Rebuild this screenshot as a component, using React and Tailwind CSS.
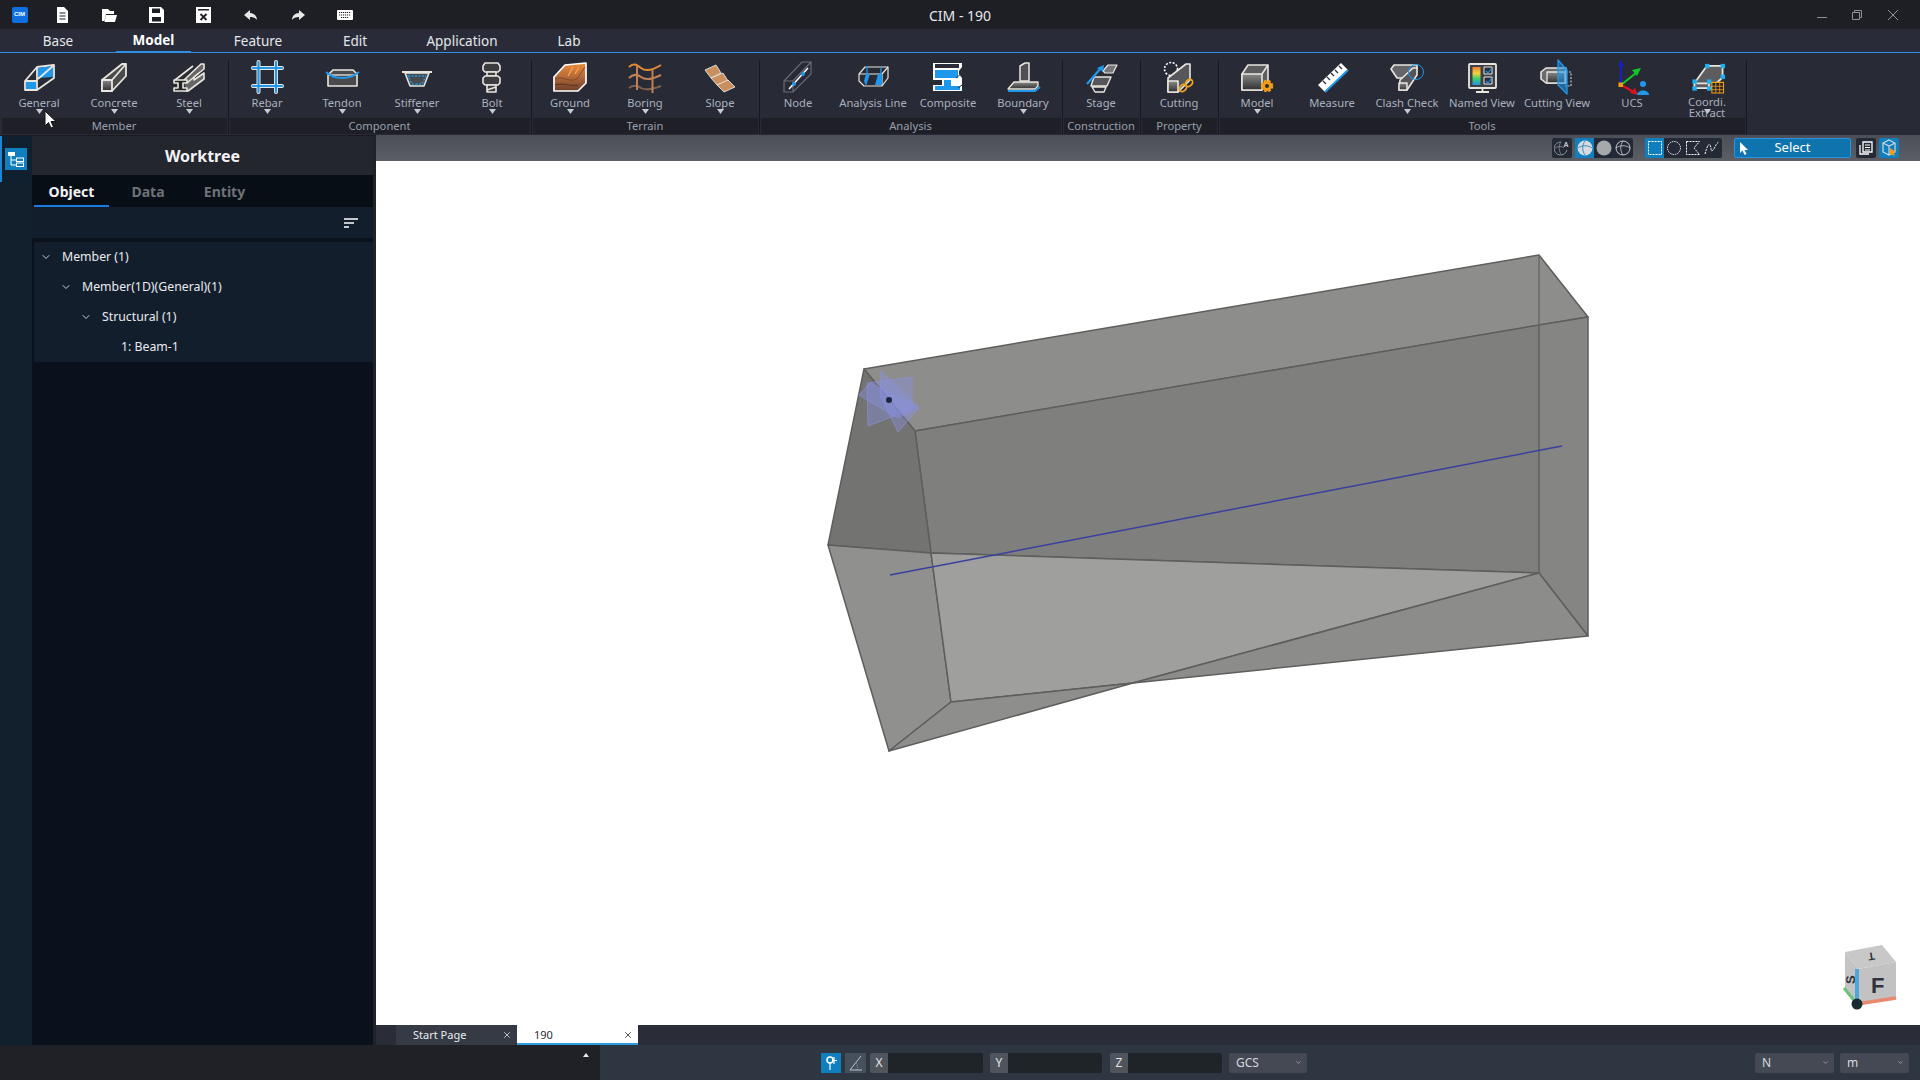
import { ChevronDown, X } from "lucide-react";

const W = "#e9e6df";
const B = "#1f97ea";

const boxGrad = (
  <defs>
    <linearGradient id="gr" x1="0" y1="0" x2="0" y2="1">
      <stop offset="0" stopColor="#8a8a88" />
      <stop offset="1" stopColor="#2f2f30" />
    </linearGradient>
    <linearGradient id="gnd" x1="0" y1="0" x2="0" y2="1">
      <stop offset="0" stopColor="#ee8c3a" />
      <stop offset="0.5" stopColor="#b5693a" />
      <stop offset="1" stopColor="#6e3f28" />
    </linearGradient>
    <linearGradient id="rain" x1="0" y1="0" x2="0" y2="1">
      <stop offset="0" stopColor="#ef7d34" />
      <stop offset="0.35" stopColor="#f2d23c" />
      <stop offset="0.65" stopColor="#3cd06a" />
      <stop offset="1" stopColor="#2a8fe8" />
    </linearGradient>
  </defs>
);

const ribbonIcons = {
  general: (
    <g stroke={W} strokeWidth="1.8" strokeLinejoin="round" fill="none">
      <path d="M8 31V22L20 8L37 6V19L20 31Z" />
      <path d="M21 9L36 7V18L21 19Z" fill={B} stroke="none" />
      <path d="M21 20L36 7" />
      <path d="M8 22H20V8M20 22V31" />
      <rect x="9" y="23" width="10" height="7" fill={B} stroke="none" />
    </g>
  ),
  concrete: (
    <g stroke={W} strokeWidth="1.8" strokeLinejoin="round">
      <path d="M10 21L30 5H34V17L20 32H10Z" fill="#4b4b4c" />
      <path d="M10 21H20V32H10Z" fill="url(#gr)" />
      <path d="M20 21L34 5" fill="none" />
    </g>
  ),
  steel: (
    <g stroke={W} strokeWidth="1.6" strokeLinejoin="round">
      <path d="M17 21L34 5H37V10L27 18V21L37 14V20L21 32H19" fill="#666" />
      <path d="M7 21H20V24H16V29H20V32H7V29H11V24H7Z" fill="#222" />
      <path d="M8 21L26 7M20 24L32 14" fill="none" />
    </g>
  ),
  rebar: (
    <g fill="none" strokeLinecap="round">
      <path d="M8 9H37M8 27H37M13.500 3V33M31 3V33" stroke={W} strokeWidth="4" />
      <path d="M8 9H37M8 27H37M13.500 3V33M31 3V33" stroke={B} strokeWidth="2.200" />
    </g>
  ),
  tendon: (
    <g strokeLinejoin="round">
      <path d="M8 16L13 11H33L37 15V27H8Z" fill="#4a4a4c" stroke={W} strokeWidth="1.6" />
      <path d="M8 16H37" stroke={W} strokeWidth="1.300" />
      <path d="M6 13C14 21 30 21 39 13" fill="none" stroke={B} strokeWidth="1.800" />
    </g>
  ),
  stiffener: (
    <g strokeLinejoin="round">
      <path d="M7 13H37" stroke={W} strokeWidth="2" />
      <path d="M10 14H34L29 27H15Z" fill="#4a4a4c" stroke={W} strokeWidth="1.5" />
      <path d="M13 17H31L27 25H17Z" fill="none" stroke={B} strokeWidth="1.5" strokeDasharray="2 1.500" />
    </g>
  ),
  bolt: (
    <g fill="#3d3d40" stroke={W} strokeWidth="1.600" strokeLinejoin="round">
      <path d="M15 4H28L30 7V11L28 13H15L13 11V7Z" />
      <path d="M17 13H26V17H17Z" />
      <path d="M15 17H28L30 19V24L28 26H15L13 24V19Z" />
      <path d="M17 26H26V33H17Z" />
      <path d="M17 31L26 28" fill="none" />
    </g>
  ),
  ground: (
    <g strokeLinejoin="round">
      <path d="M6 32V18L17 6L38 4V24L30 32Z" fill="url(#gnd)" stroke="#fff" strokeWidth="1.700" />
      <path d="M7 20C14 16 20 24 29 20L37 8" fill="none" stroke="#7f4a2b" strokeWidth="1" />
      <path d="M7 26C15 23 21 28 30 26" fill="none" stroke="#5c3421" strokeWidth="1.200" />
      <path d="M25 8L20 17M31 8L27 15" fill="none" stroke="#f3a04f" strokeWidth="1.500" />
    </g>
  ),
  boring: (
    <g fill="none" strokeWidth="2">
      <path d="M6 8C10 4 13 5 18 9C23 13 30 11 38 6" stroke="#e58a35" />
      <path d="M6 19C10 15 14 15 18 18C23 22 30 20 38 16" stroke="#c08055" />
      <path d="M6 29C10 26 14 26 18 29C23 32 30 30 38 27" stroke="#7d604e" />
      <path d="M14 6V31" stroke="#c08055" />
      <path d="M29.500 11V34" stroke="#c08055" />
    </g>
  ),
  slope: (
    <g fill="#c98f5f" stroke={W} strokeWidth="0.900">
      <path d="M7 11L18 6L23 14L13 19Z" />
      <path d="M13 19L25 14L30 22L19 26Z" />
      <path d="M19 26L30 21L37 28L26 33Z" />
    </g>
  ),
  node: (
    <g fill="none">
      <path d="M8 22V33H17L35 15V3H26ZM8 22H17V33M17 22L35 3" stroke="#6a6c72" strokeWidth="1.200" />
      <path d="M13 30L32 9" stroke="#fff" strokeWidth="1.600" />
      <circle cx="18" cy="25" r="2" fill={B} />
      <circle cx="27" cy="15" r="2" fill={B} />
    </g>
  ),
  analysis: (
    <g fill="none" stroke={W} strokeWidth="1.200" strokeLinejoin="round">
      <path d="M8 15L14 8H37V19L31 27H13L8 22Z" />
      <path d="M8 15H31V27M31 15L37 8" />
      <path d="M15 15H19L15 27L13 22Z" fill={B} stroke="none" />
      <path d="M27 15H31V26H24Z" fill={B} stroke="none" />
      <path d="M16 7V17M30 8V18" stroke={B} strokeWidth="1.300" />
    </g>
  ),
  composite: (
    <g strokeLinejoin="round">
      <path d="M7 4H36V8L33 12V15L36 19V32H7V26H16V21H7Z" fill="#fff" />
      <path d="M9 11H32V19H9Z" fill={B} />
      <path d="M9 27H18V21H25V27H34V31H9Z" fill={B} />
      <path d="M9 5H33V9H9Z" fill="#2b2d38" />
      <path d="M36 14L30 19M36 26L32 29" stroke="#2b2d38" strokeWidth="1" />
    </g>
  ),
  boundary: (
    <g strokeLinejoin="round">
      <path d="M7 30L13 23H37V27L34 30Z" fill="url(#gr)" stroke={W} strokeWidth="1.300" />
      <path d="M19 7L24 4H28V22H19Z" fill="#505054" stroke={W} strokeWidth="1.500" />
      <path d="M7 32H34L39 28" fill="none" stroke={B} strokeWidth="2" />
    </g>
  ),
  stage: (
    <g strokeLinejoin="round">
      <path d="M24 12L29 6H38L34 14H26Z" fill="#77777a" stroke={W} strokeWidth="1.200" />
      <path d="M15 18H32L28 27H12Z" fill="#55555a" stroke={W} strokeWidth="1.400" />
      <path d="M13 28H27L25 33H16Z" fill="none" stroke={W} strokeWidth="1.400" />
      <path d="M8 25L22 9" stroke={B} strokeWidth="2.300" />
      <path d="M18 9L25 6L24 13Z" fill={B} />
    </g>
  ),
  cutting: (
    <g strokeLinejoin="round" fill="none">
      <circle cx="14" cy="10" r="6.500" stroke="#fff" strokeWidth="1.600" strokeDasharray="2 1.500" />
      <path d="M11 19L29 5H33V21L21 33H11Z" fill="#57575a" stroke={W} strokeWidth="1.600" />
      <path d="M11 22H21V33H11Z" fill="url(#gr)" stroke={W} strokeWidth="1.600" />
      <ellipse cx="26" cy="29" rx="3" ry="4" transform="rotate(45 26 29)" stroke="#f0a21c" strokeWidth="1.800" />
      <ellipse cx="32" cy="24" rx="3" ry="4" transform="rotate(45 32 24)" stroke="#f0a21c" strokeWidth="1.800" />
    </g>
  ),
  model: (
    <g strokeLinejoin="round">
      <path d="M7 15L13 6H33V24L27 31H7Z" fill="#5d5d60" stroke={W} strokeWidth="1.600" />
      <path d="M7 15H27V31H7Z" fill="url(#gr)" stroke={W} strokeWidth="1.600" />
      <path d="M27 15L33 6" stroke={W} strokeWidth="1.500" />
      <circle cx="32" cy="27" r="5" fill="#f29d16" stroke="#f29d16" strokeWidth="2.500" strokeDasharray="2.500 1.500" />
      <circle cx="32" cy="27" r="2" fill="#2b2d38" />
    </g>
  ),
  measure: (
    <g strokeLinejoin="round">
      <path d="M8 26L31 4L38 11L15 33Z" fill="#fff" />
      <path d="M15 33L38 11" stroke={B} strokeWidth="2" />
      <path d="M13 22L16 25M17 18L20 21M21 14L24 17M25 11L28 14M29 7L32 10" stroke="#2b2d38" strokeWidth="1.300" />
    </g>
  ),
  clash: (
    <g strokeLinejoin="round">
      <path d="M6 10L9 6H32V10H27L20 19H12Z" fill="#66666a" stroke={W} strokeWidth="1.600" />
      <path d="M15 21L28 9H32V16L22 31H14Z" fill="#55555a" stroke={W} strokeWidth="1.600" />
      <path d="M14 24H22V31H14Z" fill="url(#gr)" stroke={W} strokeWidth="1.500" />
      <circle cx="31" cy="13" r="7.500" fill="none" stroke={B} strokeWidth="1" />
    </g>
  ),
  named: (
    <g strokeLinejoin="round">
      <rect x="9" y="5" width="27" height="24" rx="1" fill="#3e4048" stroke={W} strokeWidth="1.800" />
      <rect x="12.500" y="8" width="8" height="18" fill="url(#rain)" />
      <rect x="24" y="8" width="8" height="7" fill="#2b2d38" stroke={W} strokeWidth="1" />
      <rect x="24" y="18" width="8" height="7" fill="#2b2d38" stroke={W} strokeWidth="1" />
      <path d="M26 12L28 14L32 9M26 22L28 24L32 19" fill="none" stroke={B} strokeWidth="1.200" />
      <path d="M22.500 29V33M16 33H29" stroke={W} strokeWidth="1.800" />
    </g>
  ),
  cview: (
    <g strokeLinejoin="round">
      <path d="M27 13H36V27H30" fill="none" stroke="#c9c9c9" strokeWidth="1.200" strokeDasharray="2 1.500" />
      <path d="M6 13L11 9H31V24H11L6 20Z" fill="#6a6a6d" stroke={W} strokeWidth="1.600" />
      <path d="M12 13H30V24H12Z" fill="url(#gr)" stroke={W} strokeWidth="1.300" />
      <path d="M23 1L32 11V35L23 26Z" fill={B} fillOpacity="0.55" stroke={B} strokeWidth="1.300" />
    </g>
  ),
  ucs: (
    <g fill="none">
      <path d="M11 26V5" stroke="#1720c4" strokeWidth="2.200" />
      <path d="M8 7L11 1L14 7Z" fill="#1720c4" />
      <path d="M11 26L26 14" stroke="#10c628" strokeWidth="2.200" />
      <path d="M22 11L31 9L27 17Z" fill="#10c628" />
      <path d="M11 26L24 33" stroke="#d9141e" strokeWidth="2.200" />
      <path d="M20 34L28 36L25 29Z" fill="#d9141e" />
      <rect x="8.500" y="23.500" width="4.500" height="4.500" fill="#f29d16" />
      <circle cx="33" cy="25" r="3" fill={B} />
      <path d="M27 36C27 30 39 30 39 36Z" fill={B} />
    </g>
  ),
  coordi: (
    <g strokeLinejoin="round">
      <path d="M9 25L22 7H38V19L26 30H9Z" fill="#5d5d60" stroke={W} strokeWidth="1.800" />
      <path d="M9 25H24V30" fill="none" stroke={W} strokeWidth="1.800" />
      {[[22, 7], [38, 7], [38, 18], [9, 23], [24, 23], [9, 30], [24, 30]].map(([x, y], i) => (
        <rect key={i} x={x - 2} y={y - 2} width="4.500" height="4.500" fill="#1db0f5" />
      ))}
      <rect x="27" y="24" width="12" height="11" fill="#26282f" stroke="#f29d16" strokeWidth="1.100" />
      <path d="M27 28H39M27 31.500H39M31 24V35M35 24V35" stroke="#f29d16" strokeWidth="0.800" />
    </g>
  ),
};

const groups = [
  {
    name: "Member",
    items: [
      { id: "general", label: "General", arrow: true },
      { id: "concrete", label: "Concrete", arrow: true },
      { id: "steel", label: "Steel", arrow: true },
    ],
  },
  {
    name: "Component",
    items: [
      { id: "rebar", label: "Rebar", arrow: true },
      { id: "tendon", label: "Tendon", arrow: true },
      { id: "stiffener", label: "Stiffener", arrow: true },
      { id: "bolt", label: "Bolt", arrow: true },
    ],
  },
  {
    name: "Terrain",
    items: [
      { id: "ground", label: "Ground", arrow: true },
      { id: "boring", label: "Boring", arrow: true },
      { id: "slope", label: "Slope", arrow: true },
    ],
  },
  {
    name: "Analysis",
    items: [
      { id: "node", label: "Node" },
      { id: "analysis", label: "Analysis Line" },
      { id: "composite", label: "Composite" },
      { id: "boundary", label: "Boundary", arrow: true },
    ],
  },
  { name: "Construction", items: [{ id: "stage", label: "Stage" }] },
  { name: "Property", items: [{ id: "cutting", label: "Cutting" }] },
  {
    name: "Tools",
    items: [
      { id: "model", label: "Model", arrow: true },
      { id: "measure", label: "Measure" },
      { id: "clash", label: "Clash Check", arrow: true },
      { id: "named", label: "Named View" },
      { id: "cview", label: "Cutting View" },
      { id: "ucs", label: "UCS" },
      { id: "coordi", label: "Coordi. Extract", arrow: true, wrap: true },
    ],
  },
];

function RibbonItem({ item }) {
  return (
    <div className="relative flex h-[65px] w-[75px] flex-col items-center pt-[6px]">
      <svg width="44" height="38" viewBox="0 0 44 38">
        {ribbonIcons[item.id]}
      </svg>
      <div
        className={
          item.wrap
            ? "w-[50px] text-center text-[11.2px] leading-[11px] text-[#aab1be]"
            : "whitespace-nowrap text-[11.2px] leading-[11px] text-[#aab1be]"
        }
      >
        {item.label}
      </div>
      {item.arrow && (
        <svg className="absolute left-[34px] top-[56px]" width="7" height="5" viewBox="0 0 7 5">
          <path d="M0 0H7L3.500 5Z" fill="#c5cad3" />
        </svg>
      )}
    </div>
  );
}

function Ribbon() {
  return (
    <div className="flex h-[82px] bg-[#282a35] pl-[1.5px] pt-0">
      {groups.map((g) => (
        <div key={g.name} className="flex">
          <div className="flex flex-col">
            <div className="flex">
              {g.items.map((item) => (
                <RibbonItem key={item.id} item={item} />
              ))}
            </div>
            <div className="flex h-[16px] items-center justify-center bg-[#1e1f27] text-[11.2px] leading-none text-[#98a0ae]">
              {g.name}
            </div>
          </div>
          <div className="flex w-[3px] justify-center pt-[7px]">
            <div className="h-[74px] w-px bg-[#17181f]" />
          </div>
        </div>
      ))}
    </div>
  );
}

function TitleBar() {
  return (
    <div className="flex h-[29px] items-center bg-[#1e1f25]">
      <div className="flex flex-1 items-center">
        <div className="flex w-[39px] justify-center">
          <div className="flex h-[16px] w-[16px] items-center justify-center rounded-[2px] bg-[#0f6fe0] font-['Liberation_Sans',sans-serif] text-[6px] font-bold text-white">
            CIM
          </div>
        </div>
        <Tool>
          <path d="M3 1H10L14 5V17H3Z" fill="#fff" />
          <path d="M5.500 7H11.500M5.500 10H11.500M5.500 13H11.500" stroke="#1e1f25" strokeWidth="1" />
        </Tool>
        <Tool>
          <path d="M1 3H7L9 5H13V8H5L3.500 15H1Z M5 9H16L14 16H3.500Z" fill="#fff" />
        </Tool>
        <Tool>
          <path d="M1 1H13L16 4V17H1Z" fill="#fff" />
          <path d="M4 2.500H12V7H4ZM4 11H13V15.500H4Z" fill="#1e1f25" />
        </Tool>
        <Tool>
          <path d="M1 1H16V17H1Z" fill="#fff" />
          <path d="M3 3H14V4.500H3Z" fill="#1e1f25" />
          <path d="M5.500 8L11.500 14M11.500 8L5.500 14" stroke="#1e1f25" strokeWidth="1.800" />
        </Tool>
        <Tool>
          <path d="M8 4L2 9L8 14V11C11 11 14 12 15 14C15 10 12 7 8 7Z" fill="#e8e8e8" />
        </Tool>
        <Tool>
          <path d="M10 4L16 9L10 14V11C7 11 4 12 3 14C3 10 6 7 10 7Z" fill="#e8e8e8" />
        </Tool>
        <Tool>
          <rect x="1" y="4" width="16" height="10" rx="1" fill="#fff" />
          <path d="M3 6.500H15M3 9H15M5 11.500H13" stroke="#1e1f25" strokeWidth="1" strokeDasharray="1.200 0.800" />
        </Tool>
      </div>
      <div className="pt-[1px] text-[14px] text-[#e6e8ec]">CIM - 190</div>
      <div className="flex flex-1 items-center justify-end text-[#8d9098]">
        <svg width="12" height="12" viewBox="0 0 12 12">
          <path d="M1 8.500H11" stroke="currentColor" strokeWidth="1" />
        </svg>
        <svg className="ml-[23px]" width="12" height="12" viewBox="0 0 12 12" fill="none">
          <path d="M1.500 3.500H8.500V10.500H1.500ZM3.500 3.500V1.500H10.500V8.500H8.500" stroke="currentColor" strokeWidth="1" />
        </svg>
        <svg className="ml-[24px] mr-[21px]" width="12" height="12" viewBox="0 0 12 12">
          <path d="M1 1L11 11M11 1L1 11" stroke="currentColor" strokeWidth="1" />
        </svg>
      </div>
    </div>
  );
}

function Tool({ children }) {
  return (
    <div className="flex w-[47px] justify-center">
      <svg width="18" height="18" viewBox="0 0 18 18">
        {children}
      </svg>
    </div>
  );
}

const tabs = [
  { name: "Base", w: "w-[116px]" },
  { name: "Model", w: "w-[75px]", active: true },
  { name: "Feature", w: "w-[134px]" },
  { name: "Edit", w: "w-[60px]" },
  { name: "Application", w: "w-[154px]" },
  { name: "Lab", w: "w-[60px]" },
];

function MenuTabs() {
  return (
    <div className="flex h-[24px] border-b border-[#2f8fe8] bg-[#292c38]">
      {tabs.map((t) => (
        <div
          key={t.name}
          className={
            t.active
              ? `${t.w} flex h-[24px] items-center justify-center border-b-2 border-[#2f8fe8] pt-[1px] text-[13.5px] font-bold text-white`
              : `${t.w} flex items-center justify-center pt-[1px] text-[13.5px] text-[#e4e7ec]`
          }
        >
          {t.name}
        </div>
      ))}
    </div>
  );
}

function TreeRow({ indent, text, chevron = true }) {
  return (
    <div className="flex h-[30px] items-center text-[12.3px] text-[#e8ebef]" style={{ paddingLeft: indent }}>
      {chevron && <ChevronDown size={12} className="mr-[10px] text-[#c9ced6]" />}
      {text}
    </div>
  );
}

function Sidebar() {
  return (
    <div className="flex w-[376px] border-t border-[#191a20] bg-[#232530]">
      <div className="w-[32px] bg-[#12202e]">
        <div className="flex h-[46px] items-center border-l-2 border-[#1f86d4] bg-[#10202f] pl-[3px]">
          <div className="flex h-[22px] w-[22px] items-center justify-center bg-[#0f7fbd]">
            <svg width="18" height="16" viewBox="0 0 18 16" fill="none">
              <rect x="1" y="1" width="7" height="4" fill="#fff" />
              <path d="M4 5V14H9M4 9H9" stroke="#fff" strokeWidth="1" />
              <rect x="9.500" y="7" width="7" height="3.500" stroke="#fff" strokeWidth="1" />
              <rect x="9.500" y="12" width="7" height="3.500" stroke="#fff" strokeWidth="1" />
            </svg>
          </div>
        </div>
      </div>
      <div className="flex w-[341px] flex-col bg-[#0a111c]">
        <div className="flex h-[39px] items-center justify-center bg-[#24262e] text-[16px] font-bold text-[#f2f3f5]">
          Worktree
        </div>
        <div className="flex h-[32px] bg-[#080e16] pl-[2px] text-[14px] font-bold text-[#6e7278]">
          <div className="flex w-[75px] items-center justify-center border-b-2 border-[#1a7be0] pt-[2px] text-[#f2f3f5]">Object</div>
          <div className="flex w-[78px] items-center justify-center">Data</div>
          <div className="flex w-[75px] items-center justify-center">Entity</div>
        </div>
        <div className="flex h-[31px] items-center justify-end bg-[#131e2c] pl-[2px] pr-[15px]">
          <svg width="14" height="10" viewBox="0 0 14 10">
            <path d="M0 1H14M0 5H10M0 9H5" stroke="#fff" strokeWidth="1.600" />
          </svg>
        </div>
        <div className="mt-[4px] ml-[2px] bg-[#131e2c]">
          <TreeRow indent={6} text="Member (1)" />
          <TreeRow indent={26} text="Member(1D)(General)(1)" />
          <TreeRow indent={46} text="Structural (1)" />
          <TreeRow indent={87} text="1: Beam-1" chevron={false} />
        </div>
      </div>
      <div className="w-[3px] bg-[#202129]" />
    </div>
  );
}

function MiniIcon({ children, active }) {
  return (
    <div className={active ? "flex h-[20px] w-[19.3px] items-center justify-center bg-[#0f7fbd]" : "flex h-[20px] w-[19.3px] items-center justify-center"}>
      <svg width="16" height="16" viewBox="0 0 16 16" fill="none">
        {children}
      </svg>
    </div>
  );
}

const sphereLines = (
  <>
    <circle cx="8" cy="8" r="7" stroke="#c8ccd2" strokeWidth="1" />
    <path d="M1 8C5 5 11 5 15 8M8 1C5 5 5 11 8 15" stroke="#c8ccd2" strokeWidth="0.800" />
  </>
);

function ViewToolbar() {
  return (
    <div className="flex h-[26px] items-center justify-end bg-gradient-to-b from-[#4c4f57] to-[#5b5e65] pr-[21px]">
      <div className="flex h-[20px] w-[20px] items-center justify-center rounded-[2px] bg-[#232a36]">
        <svg width="16" height="16" viewBox="0 0 16 16" fill="none">
          <path d="M13 10A6.500 6.500 0 1 1 7 2" stroke="#8b8f96" strokeWidth="1" />
          <path d="M1 8C4 6 8 6 10 8M7 2C4 6 5 11 7 14" stroke="#8b8f96" strokeWidth="0.800" />
          <text x="9.500" y="7" fontSize="7" fontWeight="700" fill="#c8ccd2" fontFamily="Liberation Sans, sans-serif">A</text>
        </svg>
      </div>
      <div className="ml-[3px] flex w-[58px] rounded-[2px] bg-[#232a36]">
        <MiniIcon active>
          <circle cx="8" cy="8" r="7.500" fill="#d8dade" />
          <path d="M1 8C5 5 11 5 15 8M8 1C5 5 5 11 8 15" stroke="#0f7fbd" strokeWidth="0.800" />
        </MiniIcon>
        <MiniIcon>
          <circle cx="8" cy="8" r="7.500" fill="#a6a8ac" />
        </MiniIcon>
        <MiniIcon>{sphereLines}</MiniIcon>
      </div>
      <div className="ml-[12px] flex w-[77px] justify-between rounded-[2px] bg-[#232a36]">
        <MiniIcon active>
          <rect x="1.500" y="1.500" width="13" height="13" stroke="#fff" strokeWidth="1" strokeDasharray="2 1" />
        </MiniIcon>
        <MiniIcon>
          <circle cx="8" cy="8" r="6.500" stroke="#fff" strokeWidth="1" strokeDasharray="1.500 1" />
        </MiniIcon>
        <MiniIcon>
          <path d="M1.500 1.500H14.500L9 8L14.500 14.500H1.500Z" stroke="#fff" strokeWidth="1" strokeDasharray="2 1" />
        </MiniIcon>
        <MiniIcon>
          <path d="M1 14C3 6 5 3 6 5C8 8 6 13 9 10C12 7 11 4 15 2" stroke="#fff" strokeWidth="1" strokeDasharray="2 1" />
        </MiniIcon>
      </div>
      <div className="relative ml-[12px] flex h-[20px] w-[117px] items-center justify-center rounded-[2px] border border-[#2a93e6] bg-[#0f74ae] text-[13px] text-white">
        <svg className="absolute left-[4px] top-[3px]" width="10" height="14" viewBox="0 0 10 14">
          <path d="M1 0V11L3.500 8.500L5.500 13L7.500 12L5.500 8H9Z" fill="#fff" />
        </svg>
        Select
      </div>
      <div className="ml-[5px] flex h-[20px] w-[20px] items-center justify-center rounded-[2px] bg-[#232a36]">
        <svg width="14" height="14" viewBox="0 0 14 14" fill="none" stroke="#fff">
          <path d="M4 1H13V11H4ZM1 4V13H10" strokeWidth="1.300" />
          <path d="M6 4H11M6 6.500H11M6 9H11" strokeWidth="1" />
        </svg>
      </div>
      <div className="ml-[3px] flex h-[20px] w-[20px] items-center justify-center rounded-[2px] bg-[#0f7fbd]">
        <svg width="16" height="18" viewBox="0 0 16 18" fill="none">
          <path d="M8 1L14 4V13L8 16L2 13V4ZM2 4L8 7L14 4M8 7V16" stroke="#d6d8dc" strokeWidth="1.200" />
          <path d="M9 9L15 13L12.500 13.500L14 17L9 15Z" fill="#f29d16" />
        </svg>
      </div>
    </div>
  );
}

// viewport scene, coordinates are page pixels
function Scene() {
  return (
    <svg className="h-full w-full" viewBox="376 161 1544 864">
      <g stroke="#5e5e5c" strokeWidth="1.500" strokeLinejoin="round">
        <polygon points="864,369 1539,255 1588,317 915,431" fill="#8d8d8b" />
        <polygon points="915,431 1539,325 1539,573 931,553" fill="#7f7f7d" />
        <polygon points="1539,325 1588,317 1588,636 1539,573" fill="#858583" />
        <polygon points="864,369 915,431 931,553 828,545" fill="#737371" />
        <polygon points="828,545 931,553 951,702 889,751" fill="#90908e" />
        <polygon points="931,553 1539,573 1133,683 951,702" fill="#9f9f9d" />
        <polygon points="889,751 951,702 1133,683" fill="#8e8e8c" />
        <polygon points="1133,683 1539,573 1588,636" fill="#8c8c8a" />
      </g>
      <path d="M1539 255V573" stroke="#6a6a68" strokeWidth="1.500" />
      <path d="M890 575L1562 446" stroke="#3b3f9f" strokeWidth="1.500" />
      <g fill="#8a90e4" fillOpacity="0.38" stroke="#8d92e6" strokeWidth="0.600">
        <polygon points="881,371 919,408 898,432 880,395" />
        <polygon points="867,383 912,377 912,409 868,426" />
        <polygon points="859,395 870,383 919,408 898,418" />
      </g>
      <circle cx="889" cy="400" r="3" fill="#1d2740" />
    </svg>
  );
}

function Gizmo() {
  return (
    <svg className="absolute bottom-[15px] right-[20px]" width="62" height="72" viewBox="1838 938 62 72">
      <polygon points="1845,952 1882,945 1896,962 1858,969" fill="#c8c8c8" />
      <polygon points="1858,969 1896,962 1896,997 1857,1004" fill="#c2c2c2" />
      <polygon points="1845,952 1858,969 1857,1004 1845,988" fill="#c4c4c4" />
      <text x="1871" y="993" fontSize="22" fontWeight="700" fill="#30333b" fontFamily="Liberation Sans, sans-serif">F</text>
      <text x="0" y="0" fontSize="13" fontWeight="700" fill="#30333b" fontFamily="Liberation Sans, sans-serif" transform="translate(1855,984) rotate(-90)">S</text>
      <text x="0" y="0" fontSize="11" fontWeight="700" fill="#30333b" fontFamily="Liberation Sans, sans-serif" transform="translate(1874,952) rotate(170)">T</text>
      <path d="M1857 1004V969" stroke="#4aa8dc" strokeWidth="4" />
      <path d="M1857 1004L1844 988" stroke="#6cc27a" strokeWidth="3" />
      <path d="M1857 1004L1896 998" stroke="#e8886e" strokeWidth="3.500" />
      <circle cx="1857" cy="1004" r="5.500" fill="#1b2b33" />
    </svg>
  );
}

function Field({ label, w }) {
  return (
    <div className="flex h-[20px]" style={{ width: w }}>
      <div className="flex w-[18px] items-center justify-center rounded-l-[2px] bg-[#50545c] text-[12px] text-[#e4e7ec]">{label}</div>
      <div className="flex-1 rounded-r-[2px] bg-[#1f2429]" />
    </div>
  );
}

function Dropdown({ label, w }) {
  return (
    <div className="flex h-[20px] items-center justify-between rounded-[2px] bg-[#444954] pl-[7px] pr-[5px] text-[12px] text-[#d5d9df]" style={{ width: w }}>
      {label}
      <ChevronDown size={7} className="text-[#c8ccd2]" />
    </div>
  );
}

function StatusBar() {
  return (
    <div className="flex h-[35px]">
      <div className="flex w-[600px] justify-end bg-[#202126] pr-[11px] pt-[8px]">
        <svg width="6" height="4" viewBox="0 0 6 4">
          <path d="M0 4L3 0L6 4Z" fill="#e6e8ec" />
        </svg>
      </div>
      <div className="flex flex-1 items-center justify-between bg-[#2e3741] pl-[221px] pr-[11px]">
        <div className="flex items-center">
          <div className="flex h-[20px] w-[20px] items-center justify-center bg-[#0f7fbd]">
            <svg width="14" height="16" viewBox="0 0 14 16" fill="none" stroke="#fff">
              <circle cx="6" cy="5" r="3" strokeWidth="1.600" />
              <path d="M6 8V15M10 2V9M8 5.500H13" strokeWidth="1.200" />
            </svg>
          </div>
          <div className="ml-[4px] flex h-[20px] w-[21px] items-center justify-center bg-[#46505c]">
            <svg width="14" height="16" viewBox="0 0 14 16" fill="none" stroke="#b9c0ca">
              <path d="M1 15L12 1M1 15H13" strokeWidth="1" />
              <path d="M8 15A7 7 0 0 0 7 8" strokeWidth="0.800" strokeDasharray="1 1" />
            </svg>
          </div>
          <div className="ml-[4px]"><Field label="X" w="113px" /></div>
          <div className="ml-[7px]"><Field label="Y" w="112px" /></div>
          <div className="ml-[8px]"><Field label="Z" w="112px" /></div>
          <div className="ml-[7px]"><Dropdown label="GCS" w="78px" /></div>
        </div>
        <div className="flex items-center gap-[6px]">
          <Dropdown label="N" w="79px" />
          <Dropdown label="m" w="69px" />
        </div>
      </div>
    </div>
  );
}

function DocTabs() {
  return (
    <div className="flex h-[20px] bg-[#2a2d38] pl-[20px] text-[11px]">
      <div className="flex w-[121px] items-center justify-between bg-[#353a44] pl-[17px] pr-[5px] text-[#e8ebef]">
        Start Page
        <X size={10} className="text-[#d5d9df]" />
      </div>
      <div className="flex w-[121px] items-center justify-between border-b-2 border-[#2a9de0] bg-white pl-[17px] pr-[5px] pt-[2px] text-[#2a2d38]">
        190
        <X size={10} className="text-[#30333b]" />
      </div>
    </div>
  );
}

export default function App() {
  return (
    <div className="flex h-[1080px] w-[1920px] flex-col overflow-hidden bg-[#232530] font-['Noto_Sans',sans-serif]">
      <svg width="0" height="0" className="absolute">{boxGrad}</svg>
      <TitleBar />
      <MenuTabs />
      <Ribbon />
      <div className="flex min-h-0 flex-1">
        <Sidebar />
        <div className="flex flex-1 flex-col">
          <ViewToolbar />
          <div className="relative min-h-0 flex-1 bg-white">
            <Scene />
            <Gizmo />
          </div>
          <DocTabs />
        </div>
      </div>
      <StatusBar />
      {/* mouse cursor */}
      <svg className="absolute left-[44px] top-[110px]" width="14" height="20" viewBox="0 0 14 20">
        <path d="M1 1V16L4.500 12.500L7 18L9.500 17L7 11.500H12Z" fill="#fff" stroke="#111" strokeWidth="1" />
      </svg>
    </div>
  );
}
